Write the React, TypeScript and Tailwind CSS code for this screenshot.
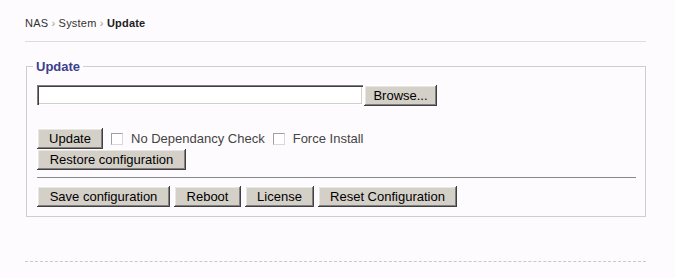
const btn =
  "h-[21px] bg-[#d4d0c8] text-[13px] text-black leading-none shadow-[inset_-1px_-1px_#404040,inset_1px_1px_#ffffff,inset_-2px_-2px_#808080,inset_2px_2px_#e8e6e2] flex items-center justify-center";

const Check = ({ label, className }: { label: string; className?: string }) => (
  <label className={"flex items-center text-[13px] text-[#444] " + (className ?? "")}>
    <input
      type="checkbox"
      className="appearance-none w-[12px] h-[12px] bg-white border border-[#a0a0a0] border-b-[#d8d8d8] border-r-[#d8d8d8] mr-[8px]"
    />
    {label}
  </label>
);

export default function App() {
  return (
    <div
      className="min-h-screen bg-[#fefbfe] pl-[25px]"
      style={{ fontFamily: '"Liberation Sans", Arial, sans-serif' }}
    >
      <div className="w-[621px]">
        <div className="h-[42px] border-b border-[#dcdcdc] pt-[15px] text-[11px] tracking-[0.2px] text-[#333]">
          NAS <span className="text-[#999]">›</span> System{" "}
          <span className="text-[#999]">›</span> <b className="text-[#222]">Update</b>
        </div>

        <fieldset className="mt-[18px] ml-[1px] w-[620px] border border-[#cfcfcf] pl-[10px] pr-[9px] pt-[12px] pb-[9px]">
          <legend className="-ml-[4px] px-[3px] text-[13px] leading-[13px] font-bold text-[#3a3f8f]">
            Update
          </legend>

          <div className="flex items-start gap-[1px]">
            <div className="w-[326px] h-[20px] bg-white shadow-[inset_1px_1px_#808080,inset_2px_2px_#404040,inset_-1px_-1px_#ffffff,inset_-2px_-2px_#d4d0c8]" />
            <button className={btn + " w-[73px]"}>Browse...</button>
          </div>

          <div className="mt-[22px] flex items-center">
            <button className={btn + " w-[66px]"}>Update</button>
            <Check label="No Dependancy Check" className="ml-[8px]" />
            <Check label="Force Install" className="ml-[8px]" />
          </div>
          <button className={btn + " w-[149px]"}>Restore configuration</button>

          <div className="mt-[7px] h-px bg-[#888]" />

          <div className="mt-[8px] flex gap-[4px]">
            <button className={btn + " w-[133px]"}>Save configuration</button>
            <button className={btn + " w-[67px]"}>Reboot</button>
            <button className={btn + " w-[69px]"}>License</button>
            <button className={btn + " w-[139px]"}>Reset Configuration</button>
          </div>
        </fieldset>

        <div className="mt-[44px] border-t border-dashed border-[#c8c8c8]" />
      </div>
    </div>
  );
}
